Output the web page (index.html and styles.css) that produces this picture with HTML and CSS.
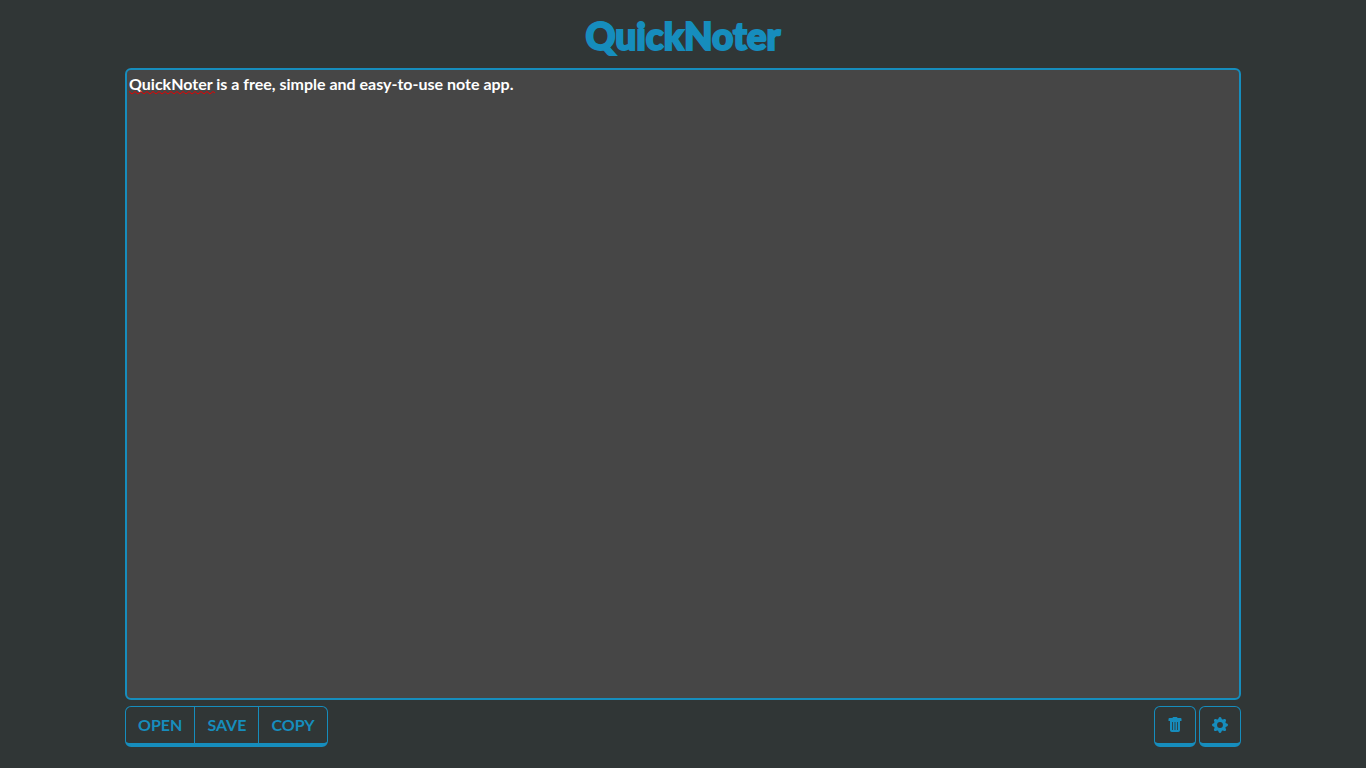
FILE: index.html
```html
<!DOCTYPE html>
<html lang="en">
<head>
<meta charset="utf-8">
<meta name="viewport" content="width=device-width, initial-scale=1">
<title>QuickNoter</title>
<link rel="stylesheet" href="styles.css">
</head>
<body>
<main class="app">
  <h1 class="brand">QuickNoter</h1>
  <div class="editor">
    <textarea class="note" aria-label="Note" spellcheck="false">QuickNoter is a free, simple and easy-to-use note app.</textarea>
    <svg class="squiggle" viewBox="0 0 86 4" aria-hidden="true">
      <path d="M0 .5L3 3L6 .5L9 3L12 .5L15 3L18 .5L21 3L24 .5L27 3L30 .5L33 3L36 .5L39 3L42 .5L45 3L48 .5L51 3L54 .5L57 3L60 .5L63 3L66 .5L69 3L72 .5L75 3L78 .5L81 3L84 .5L86 2" fill="none" stroke="#e60000"/>
    </svg>
  </div>
  <div class="toolbar">
    <div class="group">
      <button class="btn" type="button">OPEN</button>
      <button class="btn" type="button">SAVE</button>
      <button class="btn" type="button">COPY</button>
    </div>
    <div class="actions">
      <button class="btn" type="button" aria-label="Delete note">
        <svg class="icon" viewBox="0 0 16 16" aria-hidden="true"><path fill="currentColor" fill-rule="evenodd" d="M5.5 1Q5.5 0 6.5 0h3q1 0 1 1h3q1 0 1 1v2h-13V2q0-1 1-1zM3 4h10v9.2q0 1.8-1.8 1.8H4.8Q3 15 3 13.200zM5 5v8h.8V5zm2.600 0v8h.8V5zm2.600 0v8h.8V5z"/></svg>
      </button>
      <button class="btn" type="button" aria-label="Settings">
        <svg class="icon" viewBox="0 0 16 16" aria-hidden="true"><path fill="currentColor" d="M9.405 1.05c-.413-1.4-2.397-1.4-2.81 0l-.1.34a1.464 1.464 0 0 1-2.105.872l-.31-.17c-1.283-.698-2.686.705-1.987 1.987l.169.311c.446.82.023 1.841-.872 2.105l-.34.1c-1.4.413-1.4 2.397 0 2.81l.34.1a1.464 1.464 0 0 1 .872 2.105l-.17.31c-.698 1.283.705 2.686 1.987 1.987l.311-.169a1.464 1.464 0 0 1 2.105.872l.1.34c.413 1.4 2.397 1.4 2.81 0l.1-.34a1.464 1.464 0 0 1 2.105-.872l.31.17c1.283.698 2.686-.705 1.987-1.987l-.169-.311a1.464 1.464 0 0 1 .872-2.105l.34-.1c1.4-.413 1.4-2.397 0-2.81l-.34-.1a1.464 1.464 0 0 1-.872-2.105l.17-.31c.698-1.283-.705-2.686-1.987-1.987l-.311.169a1.464 1.464 0 0 1-2.105-.872zM8 10.93a2.929 2.929 0 1 1 0-5.86 2.929 2.929 0 0 1 0 5.858z"/></svg>
      </button>
    </div>
  </div>
</main>
</body>
</html>
```
FILE: styles.css
```css
:root {
  --accent: #168dbd;
  --page: #303636;
  --surface: #464646;
}

* { box-sizing: border-box; }

body {
  margin: 0;
  background: var(--page);
  color: #fff;
  font: 16px/24px Lato, "Liberation Sans", sans-serif;
}

.app {
  display: flex;
  flex-direction: column;
  min-height: 100vh;
  max-width: 1140px;
  margin: 0 auto;
  padding: 12px 12px 21px;
}

.brand {
  margin: 0 0 8px;
  color: var(--accent);
  font-size: 37px;
  font-weight: 900;
  line-height: 48px;
  text-align: center;
  -webkit-text-stroke: 2px var(--accent);
}

.editor {
  position: relative;
  display: flex;
  flex: 1;
}

.note {
  flex: 1;
  min-height: 240px;
  padding: 2px;
  border: 2px solid var(--accent);
  border-radius: 6px;
  outline: 0;
  resize: none;
  background: var(--surface);
  color: inherit;
  font: inherit;
  font-weight: 700;
}

.squiggle {
  position: absolute;
  top: 23px;
  left: 4px;
  width: 86px;
  height: 4px;
  pointer-events: none;
}

.toolbar {
  display: flex;
  justify-content: space-between;
  margin-top: 6px;
}

.group { display: flex; }

.actions {
  display: flex;
  gap: 3px;
}

.btn {
  padding: 6px 12px;
  border: 1px solid var(--accent);
  border-bottom-width: 4px;
  border-radius: 6px;
  background: transparent;
  color: var(--accent);
  font: inherit;
  font-weight: 700;
  cursor: pointer;
}

.group .btn:not(:first-child) {
  margin-left: -1px;
  border-top-left-radius: 0;
  border-bottom-left-radius: 0;
}

.group .btn:not(:last-child) {
  border-top-right-radius: 0;
  border-bottom-right-radius: 0;
}

.icon {
  display: block;
  width: 16px;
  height: 16px;
}
```
